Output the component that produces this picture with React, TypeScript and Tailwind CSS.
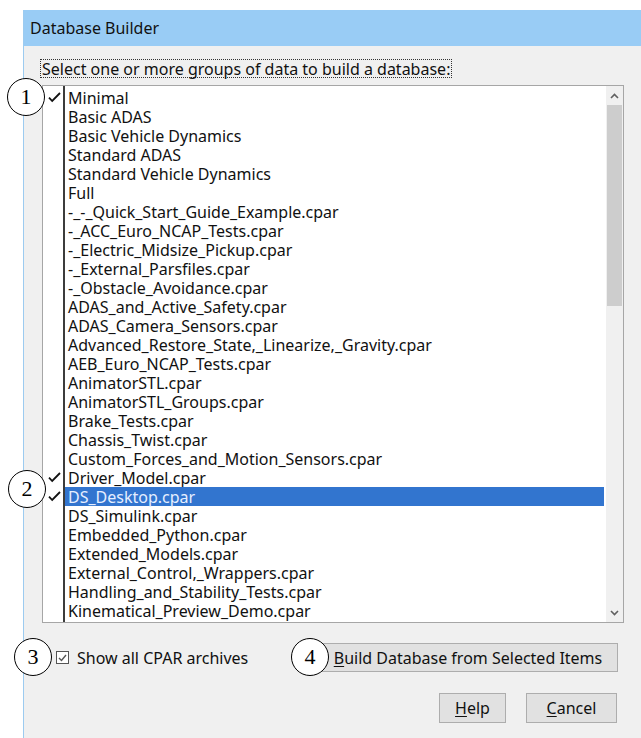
import React from "react";

const items = [
  "Minimal",
  "Basic ADAS",
  "Basic Vehicle Dynamics",
  "Standard ADAS",
  "Standard Vehicle Dynamics",
  "Full",
  "-_-_Quick_Start_Guide_Example.cpar",
  "-_ACC_Euro_NCAP_Tests.cpar",
  "-_Electric_Midsize_Pickup.cpar",
  "-_External_Parsfiles.cpar",
  "-_Obstacle_Avoidance.cpar",
  "ADAS_and_Active_Safety.cpar",
  "ADAS_Camera_Sensors.cpar",
  "Advanced_Restore_State,_Linearize,_Gravity.cpar",
  "AEB_Euro_NCAP_Tests.cpar",
  "AnimatorSTL.cpar",
  "AnimatorSTL_Groups.cpar",
  "Brake_Tests.cpar",
  "Chassis_Twist.cpar",
  "Custom_Forces_and_Motion_Sensors.cpar",
  "Driver_Model.cpar",
  "DS_Desktop.cpar",
  "DS_Simulink.cpar",
  "Embedded_Python.cpar",
  "Extended_Models.cpar",
  "External_Control,_Wrappers.cpar",
  "Handling_and_Stability_Tests.cpar",
  "Kinematical_Preview_Demo.cpar",
];

const checked = new Set(["Minimal", "Driver_Model.cpar", "DS_Desktop.cpar"]);
const selected = "DS_Desktop.cpar";

function Check() {
  return (
    <svg width="13" height="11" viewBox="0 0 13 11">
      <path d="M1 5.6 L4.2 9 L12 1" fill="none" stroke="#111" strokeWidth="1.8" />
    </svg>
  );
}

function Callout({ n, className }: { n: string; className: string }) {
  return (
    <div className={`absolute ${className}`}>
      <div className="relative w-[38px] h-[38px] rounded-full border border-black bg-white flex items-center justify-center text-[22px] leading-none text-black font-['Liberation_Serif',serif]">
        {n}
      </div>
    </div>
  );
}

function Chevron({ up }: { up?: boolean }) {
  return (
    <svg width="9" height="6" viewBox="0 0 9 6">
      <path
        d={up ? "M1 5 L4.5 1.5 L8 5" : "M1 1 L4.5 4.5 L8 1"}
        fill="none"
        stroke="#606060"
        strokeWidth="1.6"
      />
    </svg>
  );
}

export default function App() {
  return (
    <div className="relative w-[641px] h-[738px] bg-white pt-[10px] pl-[23px] overflow-hidden font-['Noto_Sans',sans-serif] text-[16px] text-[#111]">
      <div className="h-full flex flex-col border-l border-[#9ccbf0]">
        {/* title bar */}
        <div className="h-[36px] shrink-0 bg-[#99ccf5] flex items-center pl-[6px] pb-[1px] text-[16px] text-[#111]">
          Database Builder
        </div>

        {/* client area */}
        <div className="flex-1 bg-[#f0f0f0] pl-[18px] pr-[17px] pt-[13px] flex flex-col">
          <div className="self-start -ml-[2px] px-[1px] h-[19px] flex items-center border border-dotted border-[#333] leading-none">
            Select one or more groups of data to build a database:
          </div>

          {/* list box */}
          <div className="mt-[7px] h-[538px] border border-[#a6a6a6] bg-white flex">
            <div className="flex-1 flex pt-[2px] min-w-0">
              <div className="w-[20px] shrink-0 flex flex-col">
                {items.map((it) => (
                  <div key={it} className="h-[19px] flex items-center justify-center pl-[2px]">
                    {checked.has(it) ? <Check /> : null}
                  </div>
                ))}
              </div>
              <div className="flex-1 border-l-2 border-[#3c3c3c] -mt-[2px] pt-[2px] flex flex-col min-w-0">
                {items.map((it) => (
                  <div
                    key={it}
                    className={
                      it === selected
                        ? "h-[19px] flex items-center pl-[3px] mr-[2px] bg-[#3275cf] text-[#e6efff] whitespace-nowrap leading-none"
                        : "h-[19px] flex items-center pl-[3px] whitespace-nowrap leading-none"
                    }
                  >
                    {it}
                  </div>
                ))}
              </div>
            </div>
            {/* vertical scroll bar */}
            <div className="w-[17px] shrink-0 bg-[#f0f0f0] flex flex-col">
              <div className="h-[19px] flex items-center justify-center">
                <Chevron up />
              </div>
              <div className="mx-[1px] h-[201px] bg-[#cdcdcd]" />
              <div className="flex-1" />
              <div className="h-[19px] flex items-center justify-center">
                <Chevron />
              </div>
            </div>
          </div>

          {/* options + build */}
          <div className="mt-[20px] h-[29px] flex items-center">
            <div className="ml-[14px] w-[13px] h-[13px] border border-[#555] bg-white flex items-center justify-center">
              <svg width="9" height="8" viewBox="0 0 9 8">
                <path d="M1 4 L3.5 6.5 L8 1" fill="none" stroke="#555" strokeWidth="1.4" />
              </svg>
            </div>
            <span className="ml-[8px]">Show all CPAR archives</span>
            <div className="ml-auto mr-[6px] w-[300px] h-[29px] border border-[#adadad] bg-[#e1e1e1] flex items-center justify-center">
              <span>
                <span className="underline underline-offset-2">B</span>uild Database from Selected Items
              </span>
            </div>
          </div>

          {/* dialog buttons */}
          <div className="mt-[21px] flex justify-end gap-[20px] pr-[7px]">
            <div className="w-[67px] h-[30px] border border-[#adadad] bg-[#e1e1e1] flex items-center justify-center">
              <span>
                <span className="underline underline-offset-2">H</span>elp
              </span>
            </div>
            <div className="w-[91px] h-[30px] border border-[#adadad] bg-[#e1e1e1] flex items-center justify-center">
              <span>
                <span className="underline underline-offset-2">C</span>ancel
              </span>
            </div>
          </div>
        </div>
      </div>

      {/* numbered callouts */}
      <Callout n="1" className="left-[7px] top-[78px]" />
      <Callout n="2" className="left-[8px] top-[470px]" />
      <Callout n="3" className="left-[14px] top-[638px]" />
      <Callout n="4" className="left-[291px] top-[638px]" />
    </div>
  );
}
